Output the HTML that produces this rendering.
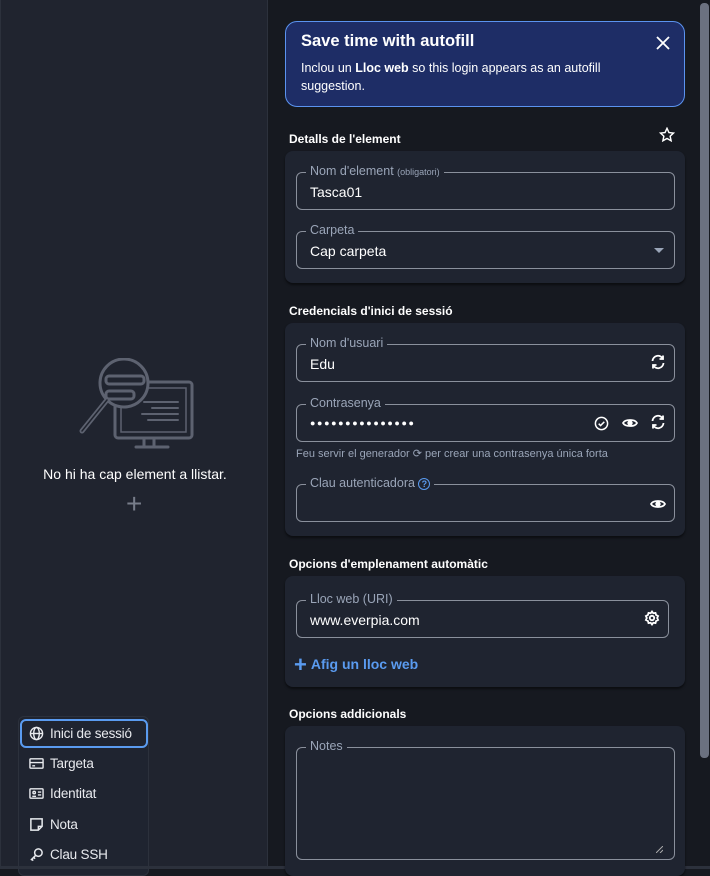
<!DOCTYPE html>
<html><head><meta charset="utf-8"><style>
*{box-sizing:border-box;margin:0;padding:0}
body{width:710px;height:869px;overflow:hidden;background:#161920;font-family:"Liberation Sans",sans-serif;color:#fff;position:relative}
.abs{position:absolute}
.left{left:0;top:0;width:268px;height:869px;background:#20242f;border-right:1px solid #2c313c;border-left:1px solid #2c313c}
.card{position:absolute;left:285px;width:400px;background:#1f2430;border-radius:8px;box-shadow:0 2px 2px rgba(0,0,0,.5)}
.h{position:absolute;left:289px;font-size:12px;font-weight:bold;color:#fff}
.f{position:absolute;border:1px solid #8a909c;border-radius:6px}
.lab{position:absolute;top:-9px;left:9px;background:#1f2430;padding:0 4px;font-size:12.5px;color:#9aa5b8;white-space:nowrap}
.val{position:absolute;left:13px;top:11px;font-size:14px;color:#fff}
.ic{position:absolute;top:9px}
.menu{left:18px;top:716px;width:131px;height:160px;background:#1f2430;border:1px solid #2c313c;border-radius:6px}
.mi{position:absolute;left:1px;width:128px;height:29px;font-size:13.5px;letter-spacing:-0.2px;color:#e8eaee;padding-left:30px;line-height:29px;white-space:nowrap}
.mi svg{position:absolute;left:9px;top:7px}
</style></head><body>
<div class="abs left"></div>
<svg class="abs" style="left:78px;top:358px" width="118" height="94" viewBox="0 0 118 94" fill="none" stroke="#5d6270" stroke-width="3" stroke-linecap="round">
<rect x="37" y="24" width="77" height="56" rx="3"/><rect x="43" y="30" width="65" height="44" stroke-width="1.5"/>
<path d="M66 44h34M74 50h26M64 56h36M70 62h30" stroke-width="2"/>
<path d="M66 80v8M76 80v8M58 89h32"/>
<circle cx="46" cy="25" r="24" fill="#20242f"/>
<rect x="28" y="18" width="38" height="8" rx="3"/><rect x="28" y="33" width="28" height="8" rx="3"/>
<path d="M29 42L4 73" stroke-width="5"/><path d="M29 42L4 73" stroke="#20242f" stroke-width="1.5"/></svg>
<div class="abs" style="left:0;width:270px;top:466px;text-align:center;font-size:14px">No hi ha cap element a llistar.</div>
<div class="abs" style="left:126px;top:492px;font-size:28px;color:#777d8a;font-weight:300;line-height:24px">+</div>
<div class="abs menu">
<div class="mi" style="top:2px;border:2px solid #5a9bf0;border-radius:6px;line-height:25px;padding-left:28px"><svg style="left:7px;top:5px" width="15" height="15" viewBox="0 0 16 16" fill="none" stroke="#e8eaee" stroke-width="1.5"><circle cx="8" cy="8" r="6.5"/><ellipse cx="8" cy="8" rx="3" ry="6.5"/><path d="M1.5 8h13"/></svg>Inici de sessió</div>
<div class="mi" style="top:32px"><svg width="15" height="15" viewBox="0 0 16 16" fill="none" stroke="#e8eaee" stroke-width="1.5"><rect x="1" y="3" width="14" height="10" rx="1"/><path d="M1 7h14M3.5 10.5h3"/></svg>Targeta</div>
<div class="mi" style="top:62px"><svg width="15" height="15" viewBox="0 0 16 16" fill="none" stroke="#e8eaee" stroke-width="1.5"><rect x="1" y="3" width="14" height="10" rx="1"/><circle cx="5.5" cy="7" r="1.3"/><path d="M3.5 11h4M9.5 6.5h3.5M9.5 9.5h3.5"/></svg>Identitat</div>
<div class="mi" style="top:93px"><svg width="15" height="15" viewBox="0 0 16 16" fill="none" stroke="#e8eaee" stroke-width="1.6"><path d="M2 2h12v8l-4 4H2z M10 14v-4h4"/></svg>Nota</div>
<div class="mi" style="top:123px"><svg width="15" height="15" viewBox="0 0 16 16" fill="none" stroke="#e8eaee" stroke-width="1.6"><circle cx="10" cy="6" r="4"/><path d="M7 9l-5 5M3 13l1.5 1.5M5 11l1.5 1.5"/></svg>Clau SSH</div>
</div>
<div class="abs" style="left:700px;top:3px;width:9px;height:755px;background:#6b7180;border-radius:4px"></div>
<div class="abs" style="left:0;top:866px;width:710px;height:3px;background:#2c313c"></div>
<div class="abs" style="left:285px;top:21px;width:400px;height:86px;background:#1e2d66;border:1px solid #5b93f0;border-radius:12px">
<div class="abs" style="left:15px;top:10px;font-size:16.5px;font-weight:bold">Save time with autofill</div>
<div class="abs" style="left:15px;top:37px;font-size:12.5px;line-height:18px;width:330px">Inclou un <b>Lloc web</b> so this login appears as an autofill suggestion.</div>
<svg class="abs" style="left:370px;top:14px" width="14" height="14" viewBox="0 0 14 14" stroke="#fff" stroke-width="1.8"><path d="M1 1l12 12M13 1L1 13"/></svg>
</div>
<div class="h" style="top:132px">Detalls de l'element</div>
<svg class="abs" style="left:659px;top:127px" width="16" height="15" viewBox="0 0 24 23" fill="none" stroke="#fff" stroke-width="2.2"><path d="M12 2l3 6.5 7 .8-5.2 4.8 1.5 7L12 17.6 5.7 21.1l1.5-7L2 9.3l7-.8z"/></svg>
<div class="card" style="top:151px;height:132px">
<div class="f" style="left:11px;top:21px;width:379px;height:38px"><div class="lab">Nom d'element <span style="font-size:9px">(obligatori)</span></div><div class="val">Tasca01</div></div>
<div class="f" style="left:11px;top:80px;width:379px;height:38px"><div class="lab">Carpeta</div><div class="val">Cap carpeta</div><div class="abs" style="right:10px;top:16px;width:0;height:0;border-left:5px solid transparent;border-right:5px solid transparent;border-top:5px solid #9aa5b8"></div></div>
</div>
<div class="h" style="top:304px">Credencials d'inici de sessió</div>
<div class="card" style="top:323px;height:213px">
<div class="f" style="left:11px;top:21px;width:379px;height:38px"><div class="lab">Nom d'usuari</div><div class="val">Edu</div>
<svg class="ic" style="left:353px" width="16" height="16" viewBox="0 0 16 16" fill="none" stroke="#fff" stroke-width="1.8"><path d="M2.5 7A5.5 5.5 0 0 1 13 5M13.5 9A5.5 5.5 0 0 1 3 11M13 1.5V5H9.5M3 14.5V11h3.5"/></svg></div>
<div class="f" style="left:11px;top:81px;width:379px;height:38px"><div class="lab">Contrasenya</div><div class="val" style="letter-spacing:1.6px;font-size:9px;top:13px">●●●●●●●●●●●●●●●</div>
<svg class="ic" style="left:297px;top:11px" width="15" height="15" viewBox="0 0 16 16" fill="none" stroke="#fff" stroke-width="1.6"><circle cx="8" cy="8" r="6.5"/><path d="M5 8.2l2 2 4-4"/></svg>
<svg class="ic" style="left:325px;top:12px" width="16" height="12" viewBox="0 0 16 12" fill="none" stroke="#fff" stroke-width="1.8"><path d="M1 6c2-4 12-4 14 0-2 4-12 4-14 0z"/><circle cx="8" cy="6" r="1.8" fill="#fff"/></svg>
<svg class="ic" style="left:353px" width="16" height="16" viewBox="0 0 16 16" fill="none" stroke="#fff" stroke-width="1.8"><path d="M2.5 7A5.5 5.5 0 0 1 13 5M13.5 9A5.5 5.5 0 0 1 3 11M13 1.5V5H9.5M3 14.5V11h3.5"/></svg></div>
<div class="abs" style="left:11px;top:124px;font-size:11px;color:#9aa5b8">Feu servir el generador ⟳ per crear una contrasenya única forta</div>
<div class="f" style="left:11px;top:161px;width:379px;height:38px"><div class="lab">Clau autenticadora <span style="display:inline-block;width:12px;height:12px;border:1.5px solid #5a9bf0;border-radius:50%;color:#5a9bf0;font-size:9px;text-align:center;line-height:10px;font-weight:bold">?</span></div>
<svg class="ic" style="left:353px;top:13px" width="16" height="12" viewBox="0 0 16 12" fill="none" stroke="#fff" stroke-width="1.8"><path d="M1 6c2-4 12-4 14 0-2 4-12 4-14 0z"/><circle cx="8" cy="6" r="1.8" fill="#fff"/></svg></div>
</div>
<div class="h" style="top:557px">Opcions d'emplenament automàtic</div>
<div class="card" style="top:576px;height:111px">
<div class="f" style="left:11px;top:24px;width:373px;height:38px"><div class="lab">Lloc web (URI)</div><div class="val">www.everpia.com</div>
<svg class="ic" style="left:347px" width="16" height="16" viewBox="0 0 16 16" fill="none" stroke="#fff" stroke-width="1.8"><circle cx="8" cy="8" r="2.2"/><path d="M8 1.5l1.3 1.8 2.2-.4.6 2.1 2 1-.9 2 .9 2-2 1-.6 2.1-2.2-.4L8 14.5l-1.3-1.8-2.2.4-.6-2.1-2-1 .9-2-.9-2 2-1 .6-2.1 2.2.4z"/></svg></div>
<div class="abs" style="left:9px;top:76px;font-size:14px;font-weight:bold;color:#5a9bf0"><span style="font-size:22px;font-weight:bold;vertical-align:-3px;margin-right:4px">+</span>Afig un lloc web</div>
</div>
<div class="h" style="top:707px">Opcions addicionals</div>
<div class="card" style="top:726px;height:150px">
<div class="f" style="left:11px;top:21px;width:379px;height:113px"><div class="lab">Notes</div>
<svg class="abs" style="right:11px;bottom:6px" width="7" height="7" viewBox="0 0 7 7" stroke="#aaa" stroke-width="1"><path d="M0 7L7 0M4 7L7 4"/></svg></div>
</div>
</body></html>
